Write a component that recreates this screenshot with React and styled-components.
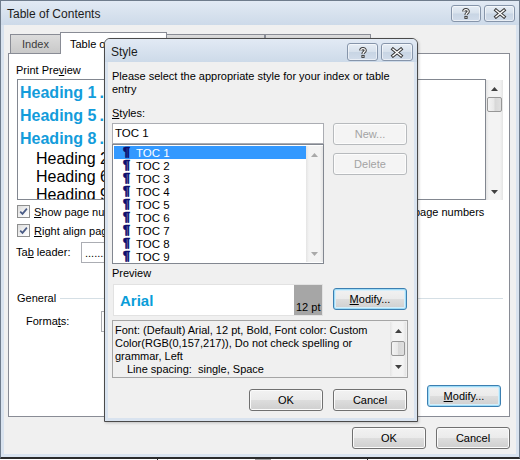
import React from "react";
import styled, { createGlobalStyle, css } from "styled-components";

const FONT = `"Liberation Sans", Arial, sans-serif`;

const GlobalStyle = createGlobalStyle`
  html, body { margin: 0; padding: 0; background: #ffffff; }
  body { font-family: ${FONT}; font-size: 11px; color: #000; }
  *, *::before, *::after { box-sizing: border-box; }
  u { text-decoration: underline; text-underline-offset: 1px; }
`;

const Desktop = styled.div`
  position: relative;
  width: 520px;
  height: 460px;
  overflow: hidden;
  background: #ffffff;
  display: flex;
  flex-direction: column;
`;

const Window = styled.div`
  flex: none;
  width: 520px;
  height: 459px;
  display: flex;
  flex-direction: column;
  border: 1px solid #6f7c8c;
  border-bottom: 2px solid #2b2b2b;
  background: #d9e3ef;
`;

const TitleBar = styled.div`
  flex: none;
  height: ${(p) => p.$h}px;
  display: flex;
  align-items: flex-start;
  padding: 0 ${(p) => p.$padRight}px 0 ${(p) => p.$padLeft}px;
  background: linear-gradient(#e2eaf4, #cddae9);
`;

const TitleText = styled.div`
  flex: 1;
  font-size: 12px;
  line-height: 14px;
  padding-top: 6px;
  color: #1c1c1c;
`;

const CaptionGroup = styled.div`
  display: flex;
  gap: 3px;
  margin-top: 4px;
`;

const CaptionButton = styled.div`
  width: ${(p) => p.$w}px;
  height: ${(p) => p.$h}px;
  border: 1px solid #8695aa;
  border-radius: 3px;
  background: linear-gradient(#e6edf5 0%, #d7e1ec 48%, #c8d5e4 52%, #d1dcea 100%);
  box-shadow: inset 0 0 0 1px rgba(255, 255, 255, 0.55);
  display: flex;
  align-items: center;
  justify-content: center;
`;

const HelpIcon = () => (
  <svg width="8" height="11" viewBox="0 0 8 11">
    <path d="M1.8 3.6 C1.8 1.1 6.2 1.1 6.2 3.4 C6.2 5.1 4 5 4 6.9" fill="none" stroke="#3b3b3b" strokeWidth="3.2" />
    <rect x="2.4" y="7.9" width="3.2" height="3" fill="#3b3b3b" />
    <path d="M1.8 3.6 C1.8 1.1 6.2 1.1 6.2 3.4 C6.2 5.1 4 5 4 6.9" fill="none" stroke="#ffffff" strokeWidth="1.2" />
    <rect x="3.4" y="8.9" width="1.2" height="1" fill="#ffffff" />
  </svg>
);

const CloseIcon = () => (
  <svg width="14" height="11" viewBox="0 0 14 11">
    <path d="M3 2.2 L11 8.8 M11 2.2 L3 8.8" stroke="#3b3b3b" strokeWidth="3.4" strokeLinecap="square" />
    <path d="M3 2.2 L11 8.8 M11 2.2 L3 8.8" stroke="#ffffff" strokeWidth="1.4" strokeLinecap="square" />
  </svg>
);

const WindowBody = styled.div`
  flex: 1;
  display: flex;
  flex-direction: column;
  margin: 0 3px 3px 3px;
  background: #f0f0f0;
  padding: 7px 6px 5px 4px;
`;

const TabStrip = styled.div`
  flex: none;
  height: 21px;
  display: flex;
  align-items: flex-end;
  padding-left: 2px;
  position: relative;
  z-index: 1;
`;

const Tab = styled.div`
  flex: none;
  width: ${(p) => p.$w}px;
  height: ${(p) => (p.$active ? 22 : 19)}px;
  margin-bottom: ${(p) => (p.$active ? -1 : 0)}px;
  margin-left: ${(p) => (p.$active ? -1 : 0)}px;
  border: 1px solid #898c95;
  border-bottom: none;
  border-left-width: ${(p) => (p.$noLeft ? 0 : 1)}px;
  background: ${(p) => (p.$active ? "#ffffff" : "linear-gradient(#dcdcdc, #c9c9c9)")};
  color: ${(p) => (p.$active ? "#000" : "#3c3c3c")};
  display: flex;
  align-items: center;
  justify-content: ${(p) => (p.$active ? "flex-start" : "center")};
  padding-left: ${(p) => (p.$active ? 9 : 0)}px;
  font-size: 11px;
  white-space: nowrap;
  overflow: hidden;
`;

const TabPanel = styled.div`
  flex: none;
  height: 364px;
  border: 1px solid #898c95;
  background: #ffffff;
  display: flex;
  flex-direction: column;
  padding: 10px 6px 9px 7px;
`;

const TwoCol = styled.div`
  display: grid;
  grid-template-columns: 247px 232px;
  column-gap: 8px;
  margin-top: ${(p) => p.$mt || 0}px;
`;

const Label = styled.div`
  line-height: 13px;
  white-space: nowrap;
  margin-left: ${(p) => p.$ml || 0}px;
  margin-top: ${(p) => p.$mt || 0}px;
  margin-bottom: ${(p) => p.$mb || 0}px;
  width: ${(p) => (p.$w ? `${p.$w}px` : "auto")};
  flex: none;
`;

const PreviewPane = styled.div`
  height: 121px;
  margin-left: ${(p) => p.$ml || 0}px;
  border: 1px solid #828790;
  background: #ffffff;
  overflow: hidden;
  padding: 1px 0 0 2px;
  flex: 1;
  min-width: 0;
`;

const PaneRow = styled.div`
  display: flex;
  height: 121px;
`;

const TocLine = styled.div`
  display: flex;
  white-space: nowrap;
  font-family: "Liberation Sans", Arial, sans-serif;
  font-size: 16px;
  line-height: ${(p) => (p.$bold ? 23 : 18)}px;
  font-weight: ${(p) => (p.$bold ? "bold" : "normal")};
  color: ${(p) => (p.$bold ? "#139cdb" : "#000")};
  padding-left: ${(p) => p.$indent || 0}px;
  padding-right: 6px;
`;

const Leader = styled.span`
  flex: 1;
  overflow: hidden;
  margin: 0 2px 0 3px;
`;

const WebLink = styled.div`
  font-size: ${(p) => (p.$bold ? 16 : 15)}px;
  line-height: ${(p) => (p.$bold ? 23 : 18)}px;
  font-weight: ${(p) => (p.$bold ? "bold" : "normal")};
  color: #139cdb;
  text-decoration: underline;
  padding-left: ${(p) => (p.$bold ? 3 : 19)}px;
  white-space: nowrap;
`;

const OptionCol = styled.div`
  display: flex;
  flex-direction: column;
`;

const CheckRow = styled.div`
  display: flex;
  align-items: center;
  gap: 4px;
  height: 13px;
  margin-top: ${(p) => p.$mt || 0}px;
  white-space: nowrap;
`;

const CheckBox = styled.span`
  flex: none;
  width: 13px;
  height: 13px;
  margin-left: ${(p) => p.$ml || 0}px;
  border: 1px solid #8e8f8f;
  background: linear-gradient(135deg, #dcdcdc 0%, #f4f4f4 60%, #ffffff 100%);
  display: flex;
  align-items: center;
  justify-content: center;
`;

const CheckMark = () => (
  <svg width="9" height="9" viewBox="0 0 9 9">
    <path d="M1.2 4.6 L3.5 6.9 L7.9 1.6" fill="none" stroke="#4a5c86" strokeWidth="1.7" />
  </svg>
);

const FieldRow = styled.div`
  display: flex;
  align-items: center;
  margin-top: ${(p) => p.$mt || 0}px;
`;

const Select = styled.div`
  flex: none;
  width: ${(p) => p.$w}px;
  height: 21px;
  border: 1px solid #abadb3;
  background: #ffffff;
  display: flex;
  align-items: center;
  justify-content: space-between;
  padding-left: 3px;
  color: #000;
`;

const SelectArrow = styled.span`
  width: 17px;
  height: 19px;
  display: flex;
  align-items: center;
  justify-content: center;
  color: #3f3f3f;
`;

const GroupHeader = styled.div`
  display: flex;
  align-items: center;
  gap: 4px;
  margin-top: 29px;
  padding-left: 1px;
`;

const GroupLine = styled.div`
  flex: 1;
  height: 1px;
  background: #d5dfe5;
`;

const PanelFooter = styled.div`
  margin-top: auto;
  display: flex;
  justify-content: flex-end;
  padding-right: 2px;
`;

const WindowFooter = styled.div`
  display: flex;
  justify-content: flex-end;
  gap: 10px;
  margin-top: 10px;
`;

const Button = styled.button`
  flex: none;
  width: 74px;
  height: 22px;
  margin: ${(p) => p.$mt || 0}px 0 0 0;
  padding: 0;
  font-family: ${FONT};
  font-size: 11px;
  line-height: 20px;
  color: #000;
  text-align: center;
  border: 1px solid #707070;
  border-radius: 3px;
  background: linear-gradient(#f2f2f2 0%, #ebebeb 48%, #dddddd 52%, #cfcfcf 100%);
  box-shadow: inset 0 0 0 1px #fbfbfb;
  ${(p) =>
    p.$focus &&
    css`
      border-color: #3c7fb1;
      box-shadow: inset 0 0 0 1px #9fdcf7, inset 0 0 0 2px #d6eefa;
    `}
  ${(p) =>
    p.disabled &&
    css`
      border-color: #b7babd;
      background: #f4f4f4;
      color: #a3a3a3;
      box-shadow: inset 0 0 0 1px #fcfcfc;
    `}
`;

/* Scrollbars */
const Scroll = styled.div`
  flex: none;
  width: ${(p) => p.$w}px;
  align-self: stretch;
  margin: ${(p) => p.$m || "0"};
  display: flex;
  flex-direction: column;
  background: linear-gradient(90deg, #e4e4e4 0, #f3f3f3 3px, #f3f3f3 calc(100% - 3px), #e4e4e4 100%);
`;

const ScrollButton = styled.div`
  flex: none;
  height: ${(p) => p.$h}px;
  display: flex;
  align-items: center;
  justify-content: center;
  color: ${(p) => (p.$dim ? "#a9a9a9" : "#404040")};
`;

const ScrollFill = styled.div`
  flex: 1;
`;

const ScrollThumb = styled.div`
  flex: none;
  height: ${(p) => p.$h}px;
  margin: ${(p) => p.$top}px 1px 0;
  border: 1px solid #979797;
  border-radius: 2px;
  background: linear-gradient(90deg, #f3f3f3 0%, #e7e7e7 48%, #d7d7d7 52%, #e0e0e0 100%);
`;

const Arrow = ({ up }) => (
  <svg width="7" height="4" viewBox="0 0 7 4">
    <path d={up ? "M0 4 L3.5 0 L7 4 Z" : "M0 0 L7 0 L3.5 4 Z"} fill="currentColor" />
  </svg>
);

function ScrollBar({ w, btn, thumbTop = 0, thumbH, dim, m }) {
  return (
    <Scroll $w={w} $m={m}>
      <ScrollButton $h={btn} $dim={dim}>
        <Arrow up />
      </ScrollButton>
      {thumbH ? <ScrollThumb $top={thumbTop} $h={thumbH} /> : null}
      <ScrollFill />
      <ScrollButton $h={btn} $dim={dim}>
        <Arrow />
      </ScrollButton>
    </Scroll>
  );
}

/* Style dialog */
const Dialog = styled.div`
  position: absolute;
  left: 104px;
  top: 38px;
  width: 314px;
  height: 384px;
  border: 1px solid #4a4a4a;
  border-radius: 6px 6px 0 0;
  background: #d9e3ef;
  display: flex;
  flex-direction: column;
  overflow: hidden;
  box-shadow: 1px 1px 3px rgba(0, 0, 0, 0.2);
  z-index: 5;
`;

const DialogBody = styled.div`
  flex: 1;
  margin: 0 3px 3px 3px;
  background: #f0f0f0;
  padding: 8px 6px 0 4px;
  display: flex;
  flex-direction: column;
`;

const Intro = styled.div`
  line-height: 13px;
  white-space: nowrap;
`;

const StylesRow = styled.div`
  display: flex;
  gap: 9px;
`;

const StylesCol = styled.div`
  width: 212px;
  display: flex;
  flex-direction: column;
`;

const ButtonCol = styled.div`
  width: 74px;
  display: flex;
  flex-direction: column;
  gap: 8px;
`;

const TextInput = styled.div`
  height: 21px;
  border: 1px solid #abadb3;
  background: #ffffff;
  padding-left: 2px;
  line-height: 19px;
  font-size: 11.5px;
`;

const ListBox = styled.div`
  height: 120px;
  border: 1px solid #828790;
  background: #ffffff;
  display: flex;
`;

const ListRows = styled.div`
  width: 193px;
  padding: 1px 0 0 1px;
  display: flex;
  flex-direction: column;
`;

const ListRow = styled.div`
  height: 13px;
  display: flex;
  align-items: center;
  padding-left: 9px;
  background: ${(p) => (p.$selected ? "#3399ff" : "transparent")};
  color: ${(p) => (p.$selected ? "#ffffff" : "#000")};
  font-size: 11.5px;
  white-space: nowrap;
`;

const Pilcrow = styled.span`
  flex: none;
  width: 13px;
  font-family: "Liberation Sans", Arial, sans-serif;
  font-weight: bold;
  font-size: 12.5px;
  line-height: 13px;
  color: #0d0f6e;
  -webkit-text-stroke: 0.7px #0d0f6e;
`;

const PreviewRow = styled.div`
  display: flex;
  align-items: flex-start;
  gap: 10px;
  margin-top: 4px;
`;

const StylePreview = styled.div`
  width: 210px;
  height: 32px;
  margin-left: 1px;
  border: 1px solid #e2e2e2;
  background: #ffffff;
  display: flex;
`;

const PreviewSample = styled.div`
  flex: 1;
  display: flex;
  align-items: center;
  padding-left: 6px;
  font-size: 15px;
  font-weight: bold;
  color: #0a9dd9;
`;

const SizeTag = styled.div`
  flex: none;
  width: 28px;
  background: #a6a6a6;
  display: flex;
  align-items: flex-end;
  padding: 0 0 1px 2px;
  line-height: 13px;
  white-space: nowrap;
`;

const DescBox = styled.div`
  height: 58px;
  margin-top: 4px;
  border: 1px solid #a5a5a5;
  background: #f0f0f0;
  display: flex;
`;

const DescText = styled.div`
  flex: 1;
  padding: 3px 0 0 2px;
  display: flex;
  flex-direction: column;
`;

const DescLine = styled.div`
  line-height: 13px;
  white-space: pre;
  padding-left: ${(p) => p.$indent || 0}px;
`;

const DialogFooter = styled.div`
  display: flex;
  justify-content: flex-end;
  gap: 10px;
  margin-top: 11px;
  padding-right: 1px;
`;

const BottomStrip = styled.div`
  flex: 1;
  display: flex;
`;

const StripCell = styled.div`
  width: ${(p) => p.$w}px;
  border-right: 1px solid ${(p) => p.$c || "#222"};
  background: ${(p) => p.$bg || "#fff"};
`;

const leader = ".".repeat(90);

const printPreview = [
  { text: "Heading 1", bold: true, page: "1" },
  { text: "Heading 5", bold: true, page: "1" },
  { text: "Heading 8", bold: true, page: "1" },
  { text: "Heading 2", bold: false, page: "3" },
  { text: "Heading 6", bold: false, page: "3" },
  { text: "Heading 9", bold: false, page: "5" },
];

const tocItems = ["TOC 1", "TOC 2", "TOC 3", "TOC 4", "TOC 5", "TOC 6", "TOC 7", "TOC 8", "TOC 9"];

export default function App() {
  return (
    <>
      <GlobalStyle />
      <Desktop>
        <Window>
          <TitleBar $h={24} $padLeft={6} $padRight={4}>
            <TitleText>Table of Contents</TitleText>
            <CaptionGroup>
              <CaptionButton $w={30} $h={17}>
                <HelpIcon />
              </CaptionButton>
              <CaptionButton $w={31} $h={17}>
                <CloseIcon />
              </CaptionButton>
            </CaptionGroup>
          </TitleBar>
          <WindowBody>
            <TabStrip>
              <Tab $w={51}>Index</Tab>
              <Tab $w={107} $active>
                Table of Contents
              </Tab>
              <Tab $w={98} $noLeft>
                Table of Figures
              </Tab>
              <Tab $w={106}>Table of Authorities</Tab>
            </TabStrip>
            <TabPanel>
              <TwoCol>
                <Label>
                  Print Pre<u>v</u>iew
                </Label>
                <Label>
                  We<u>b</u> Preview
                </Label>
              </TwoCol>
              <TwoCol $mt={2}>
                <PaneRow>
                  <PreviewPane $ml={1}>
                    {printPreview.map((h) => (
                      <TocLine key={h.text} $bold={h.bold} $indent={h.bold ? 0 : 16}>
                        <span>{h.text}</span>
                        <Leader>{leader}</Leader>
                        <span>{h.page}</span>
                      </TocLine>
                    ))}
                  </PreviewPane>
                </PaneRow>
                <PaneRow>
                  <PreviewPane>
                    <WebLink $bold>Heading 1</WebLink>
                    <WebLink $bold>Heading 5</WebLink>
                    <WebLink $bold>Heading 8</WebLink>
                    <WebLink>Heading 2</WebLink>
                    <WebLink>Heading 6</WebLink>
                  </PreviewPane>
                  <ScrollBar w={17} btn={17} m="1px 0 0 0" thumbH={15} />
                </PaneRow>
              </TwoCol>
              <TwoCol $mt={5}>
                <OptionCol>
                  <CheckRow>
                    <CheckBox $ml={1}>
                      <CheckMark />
                    </CheckBox>
                    <span>
                      <u>S</u>how page numbers
                    </span>
                  </CheckRow>
                  <CheckRow $mt={6}>
                    <CheckBox $ml={1}>
                      <CheckMark />
                    </CheckBox>
                    <span>
                      <u>R</u>ight align page numbers
                    </span>
                  </CheckRow>
                  <FieldRow $mt={5}>
                    <Label $w={65}>
                      Ta<u>b</u> leader:
                    </Label>
                    <Select $w={160}>
                      <span>.......</span>
                      <SelectArrow>
                        <Arrow />
                      </SelectArrow>
                    </Select>
                  </FieldRow>
                </OptionCol>
                <OptionCol>
                  <CheckRow>
                    <CheckBox>
                      <CheckMark />
                    </CheckBox>
                    <span>
                      Use h<u>y</u>perlinks instead of page numbers
                    </span>
                  </CheckRow>
                </OptionCol>
              </TwoCol>
              <GroupHeader>
                <Label>General</Label>
                <GroupLine />
              </GroupHeader>
              <FieldRow $mt={6}>
                <Label $ml={10} $w={75}>
                  Forma<u>t</u>s:
                </Label>
                <Select $w={150}>
                  <span>From template</span>
                  <SelectArrow>
                    <Arrow />
                  </SelectArrow>
                </Select>
              </FieldRow>
              <PanelFooter>
                <Button $focus>
                  <u>M</u>odify...
                </Button>
              </PanelFooter>
            </TabPanel>
            <WindowFooter>
              <Button>OK</Button>
              <Button>Cancel</Button>
            </WindowFooter>
          </WindowBody>
        </Window>
        <BottomStrip>
          <StripCell $w={158} />
          <StripCell $w={97} $c="#fff" />
          <StripCell $w={16} $bg="#a0a0a0" $c="#a0a0a0" />
          <StripCell $w={97} />
        </BottomStrip>

        <Dialog>
          <TitleBar $h={23} $padLeft={6} $padRight={4}>
            <TitleText>Style</TitleText>
            <CaptionGroup>
              <CaptionButton $w={31} $h={18}>
                <HelpIcon />
              </CaptionButton>
              <CaptionButton $w={32} $h={18}>
                <CloseIcon />
              </CaptionButton>
            </CaptionGroup>
          </TitleBar>
          <DialogBody>
            <Intro>
              Please select the appropriate style for your index or table
              <br />
              entry
            </Intro>
            <Label $mt={11} $mb={3}>
              <u>S</u>tyles:
            </Label>
            <StylesRow>
              <StylesCol>
                <TextInput>TOC 1</TextInput>
                <ListBox>
                  <ListRows>
                    {tocItems.map((t, i) => (
                      <ListRow key={t} $selected={i === 0}>
                        <Pilcrow>¶</Pilcrow>
                        <span>{t}</span>
                      </ListRow>
                    ))}
                  </ListRows>
                  <ScrollBar w={17} btn={17} dim m="1px 0 1px 0" />
                </ListBox>
              </StylesCol>
              <ButtonCol>
                <Button disabled>New...</Button>
                <Button disabled>Delete</Button>
              </ButtonCol>
            </StylesRow>
            <Label $mt={3}>Preview</Label>
            <PreviewRow>
              <StylePreview>
                <PreviewSample>Arial</PreviewSample>
                <SizeTag>12 pt</SizeTag>
              </StylePreview>
              <Button $focus $mt={4}>
                <u>M</u>odify...
              </Button>
            </PreviewRow>
            <DescBox>
              <DescText>
                <DescLine>Font: (Default) Arial, 12 pt, Bold, Font color: Custom</DescLine>
                <DescLine>Color(RGB(0,157,217)), Do not check spelling or</DescLine>
                <DescLine>grammar, Left</DescLine>
                <DescLine $indent={12}>Line spacing:  single, Space</DescLine>
              </DescText>
              <ScrollBar w={16} btn={18} thumbTop={1} thumbH={15} m="1px 1px 1px 0" />
            </DescBox>
            <DialogFooter>
              <Button>OK</Button>
              <Button>Cancel</Button>
            </DialogFooter>
          </DialogBody>
        </Dialog>
      </Desktop>
    </>
  );
}
